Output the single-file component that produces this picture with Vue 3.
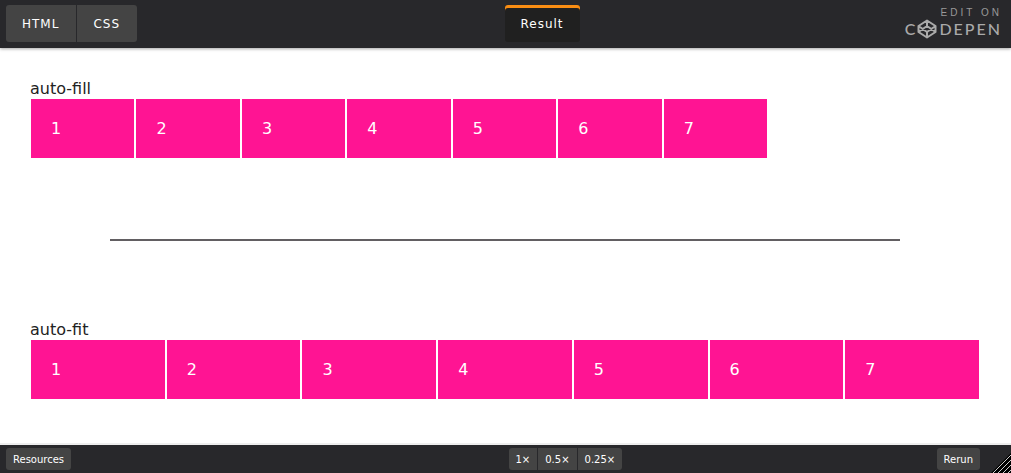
<script setup>
import { ref } from 'vue'

const items = [1, 2, 3, 4, 5, 6, 7]
const demos = [
  { label: 'auto-fill', mode: 'fill' },
  { label: 'auto-fit', mode: 'fit' }
]
const zooms = ['1×', '0.5×', '0.25×']

const active = ref('Result')
</script>

<template>
  <div class="embed">
    <header class="top">
      <div class="group">
        <button
          v-for="tab in ['HTML', 'CSS']"
          :key="tab"
          type="button"
          :class="['tab', { active: active === tab }]"
          @click="active = tab"
        >{{ tab }}</button>
      </div>
      <div class="right">
        <button
          type="button"
          :class="['tab', 'result', { active: active === 'Result' }]"
          @click="active = 'Result'"
        >Result</button>
        <a class="brand" href="#" aria-label="Edit on CodePen">
          <span class="edit">EDIT ON</span>
          <span class="wordmark">
            <span>C</span>
            <svg class="logo" viewBox="0 0 20 20" aria-hidden="true">
              <path d="M10 1.5 18.5 7v6L10 18.5 1.5 13V7zM10 1.5V7M10 13v5.5M1.5 7 10 13l8.5-6M1.5 13 10 7l8.5 6" />
            </svg>
            <span>DEPEN</span>
          </span>
        </a>
      </div>
    </header>

    <main class="preview">
      <template v-for="(demo, i) in demos" :key="demo.mode">
        <hr v-if="i > 0">
        <section>
          <div>{{ demo.label }}</div>
          <div :class="['grid', demo.mode]">
            <div v-for="n in items" :key="n" class="item">{{ n }}</div>
          </div>
        </section>
      </template>
    </main>

    <footer class="bottom">
      <div>
        <button type="button" class="small">Resources</button>
      </div>
      <div class="right tools">
        <div class="group">
          <button v-for="z in zooms" :key="z" type="button" class="small zoom">{{ z }}</button>
        </div>
        <button type="button" class="small">Rerun</button>
      </div>
      <svg class="grip" viewBox="0 0 20 20" aria-hidden="true">
        <path class="shade" d="M0 20 20 0v20z" />
        <path d="M1 21 21 1M6 21 21 6M11 21 21 11M16 21l5-5" />
      </svg>
    </footer>
  </div>
</template>

<style>
body {
  margin: 0;
}
</style>

<style scoped>
.embed {
  display: flex;
  flex-direction: column;
  min-height: 100vh;
  background: #fff;
  color: #222;
  font-family: 'DejaVu Sans', sans-serif;
  font-size: 16px;
  line-height: 19px;
}

button {
  border: 0;
  background: #444;
  color: #fff;
  font-family: inherit;
  cursor: pointer;
}

.top {
  display: grid;
  grid-template-columns: 1fr 1fr;
  box-sizing: border-box;
  height: 48px;
  padding: 5px 8px 5px 6px;
  background: #28282b;
  box-shadow: 0 1px 3px rgba(0, 0, 0, 0.35);
}

.group {
  display: flex;
  gap: 1px;
}

.right {
  display: flex;
  justify-content: space-between;
  align-items: flex-start;
}

.tab {
  height: 37px;
  padding: 0 16px;
  font-size: 12px;
  letter-spacing: 1px;
}

.group .tab {
  padding-right: 17px;
}

.group button:first-child {
  border-radius: 3px 0 0 3px;
}

.group button:last-child {
  border-radius: 0 3px 3px 0;
}

.tab.result {
  border-radius: 3px;
}

.tab.active {
  background: #202020;
  box-shadow: inset 0 3px #f98d13;
}

.brand {
  display: flex;
  flex-direction: column;
  align-items: flex-end;
  padding: 2px 1px 0 0;
  color: #aaa;
  text-decoration: none;
}

.edit {
  color: #999;
  font-family: 'Liberation Sans', sans-serif;
  font-size: 10px;
  line-height: 12px;
  letter-spacing: 3px;
}

.wordmark {
  display: flex;
  align-items: center;
  font-family: Lato, sans-serif;
  font-size: 16px;
  font-weight: 500;
  line-height: 20px;
  letter-spacing: 2px;
}

.logo {
  width: 20px;
  height: 20px;
  margin-right: 2px;
  fill: none;
  stroke: #aaa;
  stroke-width: 2;
  stroke-linejoin: round;
}

.preview {
  flex: 1;
  padding: 31px 31px 20px 30px;
  border-bottom: 2px solid #eee;
}

.grid {
  display: grid;
}

.grid.fill {
  margin-right: 1px;
  grid-template-columns: repeat(auto-fill, minmax(100px, 1fr));
}

.grid.fit {
  grid-template-columns: repeat(auto-fit, minmax(100px, 1fr));
}

.item {
  padding: 20px;
  border: 1px solid #fff;
  background: deeppink;
  color: #fff;
}

hr {
  height: 2px;
  margin: 80px 80px 79px;
  border: 0;
  background: #625f62;
}

.bottom {
  position: relative;
  display: grid;
  grid-template-columns: 1fr 1fr;
  align-items: center;
  box-sizing: border-box;
  height: 28px;
  padding: 0 8px 0 6px;
  background: #28282b;
  line-height: 0;
}

.tools {
  padding: 0 23px 0 4px;
}

.small {
  height: 22px;
  padding: 0 7px;
  border-radius: 3px;
  font-size: 10px;
}

.zoom {
  border-radius: 0;
}

.grip {
  position: absolute;
  right: 0;
  bottom: 0;
  width: 20px;
  height: 20px;
  fill: none;
  stroke: #ccc;
  stroke-width: 1;
}

.shade {
  fill: #000;
  stroke: none;
}
</style>
